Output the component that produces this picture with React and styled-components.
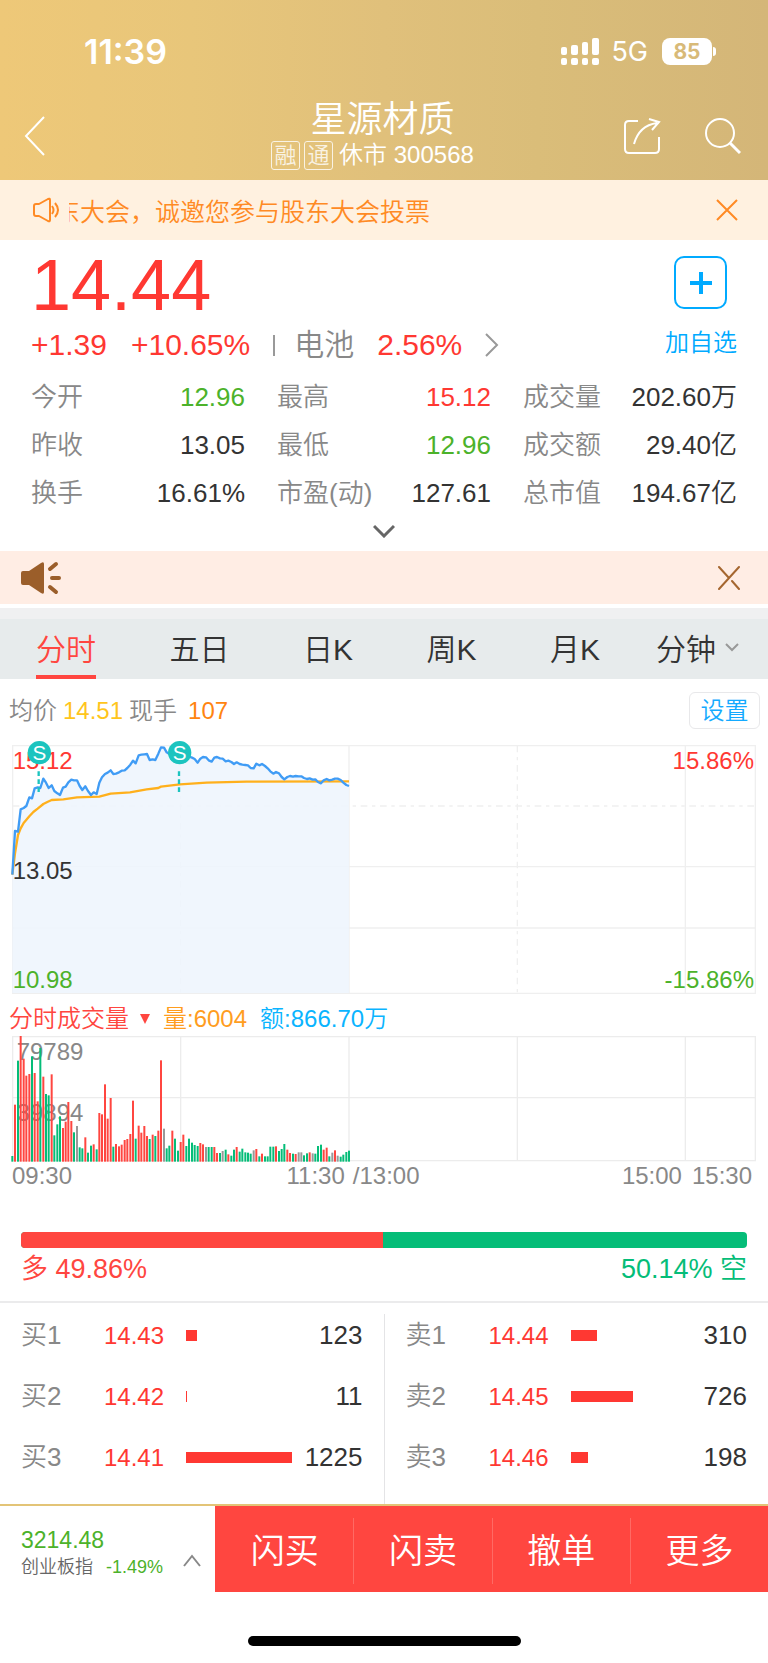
import React from 'react';
import styled, { createGlobalStyle } from 'styled-components';

const RED = '#ff3832';
const GREEN = '#4cb22a';
const DARK = '#333';
const GREY = '#888';

const quoteItems = [
  { label: '今开', value: '12.96', color: GREEN },
  { label: '最高', value: '15.12', color: RED },
  { label: '成交量', value: '202.60万' },
  { label: '昨收', value: '13.05' },
  { label: '最低', value: '12.96', color: GREEN },
  { label: '成交额', value: '29.40亿' },
  { label: '换手', value: '16.61%' },
  { label: '市盈(动)', value: '127.61' },
  { label: '总市值', value: '194.67亿' },
];

const tabs = ['分时', '五日', '日K', '周K', '月K'];

const buyOrders = [
  { label: '买1', price: '14.43', amount: 123 },
  { label: '买2', price: '14.42', amount: 11 },
  { label: '买3', price: '14.41', amount: 1225 },
];

const sellOrders = [
  { label: '卖1', price: '14.44', amount: 310 },
  { label: '卖2', price: '14.45', amount: 726 },
  { label: '卖3', price: '14.46', amount: 198 },
];

const MAX_AMOUNT = 1225;

const actions = ['闪买', '闪卖', '撤单', '更多'];

// one sample per minute, in chart units from the top
const prices = [
  389, 258, 260, 193, 189, 183, 157, 160, 130, 127, 129, 101, 113, 129, 121, 138, 145, 150, 128, 125,
  112, 104, 106, 106, 123, 135, 124, 138, 150, 142, 147, 113, 97, 87, 83, 76, 87, 86, 82, 77,
  76, 69, 59, 47, 55, 31, 29, 28, 27, 45, 43, 45, 26, 7, 8, 22, 27, 19, 27, 35,
  29, 33, 25, 35, 38, 42, 53, 41, 36, 37, 46, 50, 38, 36, 40, 41, 49, 47, 51, 57,
  52, 57, 59, 60, 61, 69, 70, 56, 61, 57, 63, 70, 79, 86, 81, 85, 96, 103, 96, 93,
  95, 93, 94, 94, 99, 102, 100, 104, 103, 111, 115, 106, 102, 106, 104, 101, 101, 105, 113, 120,
  123,
];

const averageLine =
  'M1 389L9 325L18 270L26 250L35 234L52 214L64 201L77 191L94 177L106 171L119 165L154 163L195 157L262 155L296 146L354 142L404 133L439 129L447 125L504 118L584 113L704 110L1011 109';

// r: up, g: down, x: flat
const volumes = (
  'g17 r171 g303 r377 r309 r258 r263 g316 r266 r181 g341 r255 g203 g199 r262 g79 g112 g136 r101 r120 ' +
  'r179 r122 g88 x107 g43 g40 r73 g27 g48 r52 g37 r146 r142 r232 r129 r191 g45 r53 r46 r51 ' +
  'r65 r68 r83 r183 g69 r108 r87 r107 r77 g68 r81 g77 r93 r304 x99 g40 g48 r93 g69 g33 ' +
  'r59 r81 g47 g69 g57 g50 g47 r56 r52 x44 g44 g44 r44 r26 g26 x32 g36 r22 g18 g36 ' +
  'r44 g30 g39 g28 g27 g24 x34 r38 g16 r24 g16 g16 g45 g45 r46 g32 g38 g53 r36 r26 ' +
  'g24 r23 x28 x28 g19 g25 r28 x25 g24 g47 g51 r36 r42 g16 x27 r34 x18 g15 g21 g29 g33'
).split(' ');

const barColors = { r: '#ff4640', g: '#05bd78', x: '#999' };

const minuteX = (i) => 1 + Math.round((i * 1010) / 120);

function PriceChart() {
  const line = prices.map((y, i) => `${i ? 'L' : 'M'}${minuteX(i)} ${y}`).join('');
  return (
    <Chart viewBox="0 0 2232 747" role="img" aria-label="分时走势">
      <g stroke="#efefef" strokeWidth="4" fill="none">
        <path d="M2 2H2230V745H2ZM2 365H2230M2 549H2230" />
        <path d="M1011 2V745M2020 2V745" />
        <path d="M2 183H2230" strokeDasharray="20 14 10 14" />
        <path d="M506 2V745M1516 2V745" strokeDasharray="20 14 10 14" />
      </g>
      <path d={`${line}V744H1Z`} fill="#edf5fd" fillOpacity="0.85" />
      <ChartText x="2" y="73" fill={RED}>15.12</ChartText>
      <ChartText x="2" y="402" fill={DARK}>13.05</ChartText>
      <ChartText x="2" y="730" fill={GREEN}>10.98</ChartText>
      <ChartText x="2226" y="73" textAnchor="end" fill={RED}>15.86%</ChartText>
      <ChartText x="2226" y="730" textAnchor="end" fill={GREEN}>-15.86%</ChartText>
      <path d={averageLine} fill="none" stroke="#ffb01c" strokeWidth="7" strokeLinejoin="round" />
      <path d={line} fill="none" stroke="#409cf5" strokeWidth="7" strokeLinejoin="round" />
      {[82, 503].map((x) => (
        <g key={x}>
          <path d={`M${x - 2} 79V142`} stroke="#1cc4bf" strokeWidth="7" strokeDasharray="14 10" />
          <circle cx={x} cy="23" r="35" fill="#1cc4bf" />
          <ChartText x={x} y="46" textAnchor="middle" fill="#fff" $size={62}>S</ChartText>
        </g>
      ))}
    </Chart>
  );
}

function VolumeChart() {
  return (
    <Chart viewBox="0 0 2232 378" role="img" aria-label="分时成交量">
      <g stroke="#ececec" strokeWidth="4" fill="none">
        <path d="M2 2H2230V374H2ZM2 185H2230" />
        <path d="M506 2V374M1011 2V374M1516 2V374M2020 2V374" />
      </g>
      <ChartText x="14" y="71" fill={GREY}>79789</ChartText>
      <ChartText x="14" y="255" fill={GREY}>39894</ChartText>
      {volumes.map((item, i) => {
        const height = Number(item.slice(1));
        return (
          <rect
            key={i}
            x={minuteX(i) - 3}
            y={377 - height}
            width="6"
            height={height}
            fill={barColors[item[0]]}
          />
        );
      })}
    </Chart>
  );
}

function Orders({ title, orders }) {
  return (
    <OrderTable aria-label={title}>
      <tbody>
        {orders.map(({ label, price, amount }) => (
          <tr key={label}>
            <OrderLabel scope="row">{label}</OrderLabel>
            <OrderPrice>{price}</OrderPrice>
            <AmountCell>
              <AmountTrack>
                <AmountBar style={{ width: `${(amount / MAX_AMOUNT) * 100}%` }} />
              </AmountTrack>
            </AmountCell>
            <OrderAmount>{amount}</OrderAmount>
          </tr>
        ))}
      </tbody>
    </OrderTable>
  );
}

function App() {
  return (
    <Page>
      <GlobalStyle />
      <Header>
        <StatusBar>
          <Clock>11:39</Clock>
          <svg width="38" height="27" viewBox="0 0 38 27" fill="#fff" aria-hidden="true">
            <rect x="0" y="9" width="6" height="8" rx="2" />
            <rect x="10" y="7" width="7" height="10" rx="2" />
            <rect x="21" y="4" width="6" height="13" rx="2" />
            <rect x="31" y="0" width="7" height="17" rx="2" />
            <rect x="0" y="20" width="6" height="7" rx="2" />
            <rect x="10" y="20" width="7" height="7" rx="2" />
            <rect x="21" y="20" width="6" height="7" rx="2" />
            <rect x="31" y="20" width="7" height="7" rx="2" />
          </svg>
          <Network>5G</Network>
          <Battery>85</Battery>
        </StatusBar>
        <NavBar>
          <IconButton type="button" aria-label="返回">
            <svg width="22" height="42" viewBox="0 0 22 42" fill="none" stroke="#fff" strokeWidth="2">
              <path d="M20 2L2 21L20 40" />
            </svg>
          </IconButton>
          <Heading>
            <StockName>星源材质</StockName>
            <StockMeta>
              <Badge>融</Badge>
              <Badge>通</Badge>
              <StockCode>休市 300568</StockCode>
            </StockMeta>
          </Heading>
          <NavActions>
            <IconButton type="button" aria-label="分享">
              <svg width="38" height="38" viewBox="0 0 38 38" fill="none" stroke="#fff" strokeWidth="2">
                <path d="M15 4H6Q2 4 2 8V32Q2 36 6 36H32Q36 36 36 32V20" />
                <path d="M11 27C14 16 20 8 34 6M26 2L36 5L29 13" />
              </svg>
            </IconButton>
            <IconButton type="button" aria-label="搜索">
              <svg width="38" height="38" viewBox="0 0 38 38" fill="none" stroke="#fff" strokeWidth="2">
                <circle cx="17" cy="16" r="14" />
                <path d="M27 26L37 36" strokeWidth="3" />
              </svg>
            </IconButton>
          </NavActions>
        </NavBar>
      </Header>

      <Notice>
        <svg width="28" height="26" viewBox="0 0 28 26" fill="none" stroke="#ff8a24" strokeWidth="2" strokeLinejoin="round" aria-hidden="true">
          <path d="M2 9Q2 7 4 7H7L16 2Q18 1 18 3V23Q18 25 16 24L7 19H4Q2 19 2 17Z" />
          <path d="M20 9Q23 13 20 17M23 6Q29 13 23 20" />
        </svg>
        <Marquee>
          <MarqueeText>东大会，诚邀您参与股东大会投票</MarqueeText>
        </Marquee>
        <IconButton type="button" aria-label="关闭公告">
          <svg width="22" height="22" viewBox="0 0 22 22" stroke="#ff8a24" strokeWidth="2">
            <path d="M1 1L21 21M21 1L1 21" />
          </svg>
        </IconButton>
      </Notice>

      <Quote>
        <QuoteTop>
          <div>
            <Price>14.44</Price>
            <ChangeRow>
              <span>+1.39</span>
              <Percent>+10.65%</Percent>
              <Divider />
              <Sector href="#sector">
                <SectorName>电池</SectorName>
                <span>2.56%</span>
                <svg width="14" height="24" viewBox="0 0 14 24" fill="none" stroke="#999" strokeWidth="2">
                  <path d="M1 1L12 12L1 23" />
                </svg>
              </Sector>
            </ChangeRow>
          </div>
          <Favourite type="button">
            <PlusBox>
              <svg width="24" height="24" viewBox="0 0 24 24" stroke="#00aaff" strokeWidth="4">
                <path d="M12 1V23M1 12H23" />
              </svg>
            </PlusBox>
            加自选
          </Favourite>
        </QuoteTop>
        <QuoteGrid>
          {quoteItems.map(({ label, value, color }) => (
            <QuoteItem key={label}>
              <dt>{label}</dt>
              <QuoteValue $color={color}>{value}</QuoteValue>
            </QuoteItem>
          ))}
        </QuoteGrid>
        <ExpandButton type="button" aria-label="展开">
          <svg width="22" height="14" viewBox="0 0 22 14" fill="none" stroke="#666" strokeWidth="3">
            <path d="M1 2L11 12L21 2" />
          </svg>
        </ExpandButton>
      </Quote>

      <Broadcast>
        <svg width="42" height="34" viewBox="0 0 42 34" fill="#9b5e2a" stroke="#9b5e2a" aria-hidden="true">
          <path d="M1 12Q1 10 3 10H9L21 2Q24 0 24 3V31Q24 34 21 32L9 24H3Q1 24 1 22Z" stroke="none" />
          <path d="M30 8L36 3M32 17H39M30 26L36 31" strokeWidth="4" strokeLinecap="round" />
        </svg>
        <IconButton type="button" aria-label="关闭广播">
          <svg width="22" height="24" viewBox="0 0 22 24" stroke="#a5662f" strokeWidth="2" strokeLinecap="round">
            <path d="M1 1L11 12M14 15L21 23M21 1L1 23" />
          </svg>
        </IconButton>
      </Broadcast>

      <TabBar>
        <TabList>
          {tabs.map((tab, i) => (
            <Tab key={tab} type="button" $active={i === 0}>
              {tab}
            </Tab>
          ))}
        </TabList>
        <Tab type="button">
          分钟
          <svg width="14" height="9" viewBox="0 0 14 9" fill="none" stroke="#999" strokeWidth="2">
            <path d="M1 1L7 7L13 1" />
          </svg>
        </Tab>
      </TabBar>

      <ChartInfo>
        <span>均价</span>
        <InfoValue $color="#ffc51c">14.51</InfoValue>
        <span>现手</span>
        <LastVolume>107</LastVolume>
        <SettingsButton type="button">设置</SettingsButton>
      </ChartInfo>

      <ChartPanel>
        <PriceChart />
        <VolumeInfo>
          <VolumeType type="button">
            分时成交量
            <VolumeCaret width="10" height="10" viewBox="0 0 10 10" fill="#ff4640" aria-hidden="true">
              <path d="M0 0H10L5 10Z" />
            </VolumeCaret>
          </VolumeType>
          <InfoValue $color="#ff9d1f">量:6004</InfoValue>
          <InfoValue $color="#0ab4ff">额:866.70万</InfoValue>
        </VolumeInfo>
        <VolumeChart />
        <TimeAxis>
          <MorningAxis>
            <span>09:30</span>
            <span>11:30</span>
          </MorningAxis>
          <span>/13:00</span>
          <ClosingAxis>
            <span>15:00</span>
            <span>15:30</span>
          </ClosingAxis>
        </TimeAxis>
      </ChartPanel>

      <Sentiment>
        <RatioBar>
          <RatioLong style={{ width: '49.86%' }} />
        </RatioBar>
        <RatioLabels>
          <RatioText $color="#ff4640">多 49.86%</RatioText>
          <RatioText $color="#05bd78">50.14% 空</RatioText>
        </RatioLabels>
      </Sentiment>

      <OrderBook>
        <Orders title="买盘" orders={buyOrders} />
        <BookDivider />
        <Orders title="卖盘" orders={sellOrders} />
      </OrderBook>

      <Footer>
        <IndexButton type="button">
          <IndexInfo>
            <IndexValue>3214.48</IndexValue>
            <IndexRow>
              <span>创业板指</span>
              <IndexChange>-1.49%</IndexChange>
            </IndexRow>
          </IndexInfo>
          <IndexArrow width="18" height="13" viewBox="0 0 18 13" fill="none" stroke="#888" strokeWidth="2">
            <path d="M1 12L9 2L17 12" />
          </IndexArrow>
        </IndexButton>
        <ActionBar>
          {actions.map((action) => (
            <ActionButton key={action} type="button">
              {action}
            </ActionButton>
          ))}
        </ActionBar>
      </Footer>
      <HomeIndicator />
    </Page>
  );
}

const GlobalStyle = createGlobalStyle`
  * {
    box-sizing: border-box;
  }

  body {
    margin: 0;
    background: #fff;
    color: ${DARK};
    font-family: 'Liberation Sans', 'Noto Sans CJK SC', sans-serif;
    font-weight: 350;
  }

  button {
    margin: 0;
    padding: 0;
    border: 0;
    background: none;
    color: inherit;
    font: inherit;
    cursor: pointer;
  }

  svg {
    display: block;
    flex-shrink: 0;
  }
`;

const Page = styled.main`
  display: flex;
  flex-direction: column;
`;

const Header = styled.header`
  height: 180px;
  background: linear-gradient(90deg, #eec878 0%, #e8c67a 25%, #e0c07b 50%, #dabd79 70%, #d4b678 100%);
  color: #fff;
`;

const StatusBar = styled.div`
  display: flex;
  align-items: center;
  height: 100px;
  padding: 3px 52px 0 84px;
`;

const Clock = styled.time`
  margin-right: auto;
  font-family: Inter, sans-serif;
  font-size: 34px;
  font-weight: 600;
`;

const Network = styled.span`
  margin: 0 14px 0 12px;
  font-family: Inter, sans-serif;
  font-size: 27px;
  font-weight: 400;
`;

const Battery = styled.span`
  display: flex;
  align-items: center;
  justify-content: center;
  position: relative;
  width: 50px;
  height: 27px;
  margin-right: 4px;
  border-radius: 8px;
  background: #fff;
  color: #d8ba78;
  font-family: Inter, sans-serif;
  font-size: 21px;
  font-weight: 700;

  &::after {
    content: '';
    position: absolute;
    right: -4px;
    top: 9px;
    width: 3px;
    height: 9px;
    border-radius: 0 3px 3px 0;
    background: #fff;
  }
`;

const NavBar = styled.div`
  display: grid;
  grid-template-columns: 1fr auto 1fr;
  align-items: center;
  height: 72px;
  padding: 0 27px 0 24px;
`;

const IconButton = styled.button`
  display: flex;
  align-items: center;
  justify-content: center;
  justify-self: start;
`;

const Heading = styled.div`
  display: flex;
  flex-direction: column;
  align-items: center;
`;

const StockName = styled.h1`
  margin: 0;
  font-size: 36px;
  font-weight: 350;
  line-height: 38px;
`;

const StockMeta = styled.div`
  display: flex;
  align-items: center;
  gap: 4px;
  padding-right: 20px;
  font-size: 24px;
  line-height: 32px;
`;

const Badge = styled.span`
  width: 29px;
  height: 29px;
  border: 1px solid #fff;
  border-radius: 3px;
  font-size: 22px;
  line-height: 27px;
  text-align: center;
  opacity: 0.8;
`;

const StockCode = styled.span`
  margin-left: 2px;
`;

const NavActions = styled.div`
  display: flex;
  justify-content: flex-end;
  gap: 42px;
`;

const Notice = styled.section`
  display: flex;
  align-items: center;
  height: 60px;
  padding: 0 30px 0 32px;
  background: #fff1e0;
  color: #ff8a24;
  font-size: 25px;
`;

const Marquee = styled.div`
  flex: 1;
  margin-left: 9px;
  overflow: hidden;
  white-space: nowrap;
`;

const MarqueeText = styled.div`
  margin-left: -14px;
`;

const Quote = styled.section`
  padding: 16px 31px 0;
`;

const QuoteTop = styled.div`
  display: flex;
  justify-content: space-between;
  height: 117px;
`;

const Price = styled.div`
  color: ${RED};
  font-size: 72px;
  line-height: 58px;
`;

const ChangeRow = styled.div`
  display: flex;
  align-items: center;
  height: 62px;
  color: ${RED};
  font-size: 30px;
`;

const Percent = styled.span`
  margin-left: 24px;
`;

const Divider = styled.span`
  width: 2px;
  height: 21px;
  margin: 0 19px 0 23px;
  background: #999;
`;

const Sector = styled.a`
  display: flex;
  align-items: center;
  gap: 23px;
  color: inherit;
  line-height: 40px;
  text-decoration: none;
`;

const SectorName = styled.span`
  color: ${GREY};
`;

const Favourite = styled.button`
  display: flex;
  flex-direction: column;
  align-items: flex-end;
  align-self: flex-start;
  gap: 17px;
  color: #00aaff;
  font-size: 24px;
  line-height: 34px;
`;

const PlusBox = styled.span`
  display: flex;
  align-items: center;
  justify-content: center;
  width: 53px;
  height: 53px;
  margin-right: 10px;
  border: 2px solid #00aaff;
  border-radius: 10px;
`;

const QuoteGrid = styled.dl`
  display: grid;
  grid-template-columns: repeat(3, 1fr);
  column-gap: 32px;
  margin: 0;
`;

const QuoteItem = styled.div`
  display: flex;
  align-items: center;
  justify-content: space-between;
  height: 48px;
  color: ${GREY};
  font-size: 26px;
  line-height: 48px;
`;

const QuoteValue = styled.dd`
  margin: 0;
  color: ${(props) => props.$color || DARK};
`;

const ExpandButton = styled.button`
  display: flex;
  justify-content: center;
  width: 100%;
  padding: 7px 0 13px;
`;

const Broadcast = styled.section`
  display: flex;
  align-items: center;
  justify-content: space-between;
  height: 53px;
  padding: 0 28px 0 20px;
  background: #ffede4;
`;

const TabBar = styled.nav`
  display: flex;
  gap: 56px;
  margin-top: 4px;
  padding: 0 29px 0 36px;
  border-top: 11px solid #f0f0f1;
  background: #e7ebec;
`;

const TabList = styled.div`
  display: flex;
  flex: 1;
  justify-content: space-between;
`;

const Tab = styled.button`
  display: flex;
  align-items: center;
  gap: 9px;
  height: 60px;
  border-bottom: 4px solid ${(props) => (props.$active ? '#ff4640' : 'transparent')};
  color: ${(props) => (props.$active ? '#ff4640' : DARK)};
  font-size: 30px;
`;

const ChartInfo = styled.div`
  display: flex;
  align-items: center;
  gap: 6px;
  height: 66px;
  padding: 0 8px 3px 9px;
  color: ${GREY};
  font-size: 24px;
  line-height: 36px;
`;

const InfoValue = styled.span`
  color: ${(props) => props.$color};
`;

const LastVolume = styled.span`
  margin-left: 5px;
  color: #ff8410;
`;

const SettingsButton = styled.button`
  width: 71px;
  height: 37px;
  margin-left: auto;
  border: 1px solid #e8e8ea;
  border-radius: 6px;
  color: #14aaff;
  line-height: 32px;
`;

const ChartPanel = styled.section`
  padding: 0 12px;
`;

const Chart = styled.svg`
  width: 100%;
  height: auto;
  overflow: visible;
`;

const ChartText = styled.text`
  font-size: ${(props) => props.$size || 72}px;
`;

const VolumeInfo = styled.div`
  display: flex;
  align-items: center;
  gap: 13px;
  height: 42px;
  margin-left: -3px;
  padding-top: 2px;
  font-size: 24px;
`;

const VolumeType = styled.button`
  display: flex;
  align-items: center;
  gap: 11px;
  color: #ff4640;
`;

const VolumeCaret = styled.svg`
  margin-top: 6px;
`;

const TimeAxis = styled.div`
  display: flex;
  color: ${GREY};
  font-size: 24px;
  line-height: 28px;
`;

const MorningAxis = styled.div`
  display: flex;
  justify-content: space-between;
  width: 45%;
  padding-right: 2px;
  margin-right: 6px;
`;

const ClosingAxis = styled.div`
  display: flex;
  gap: 10px;
  margin-left: auto;
  padding-right: 4px;
`;

const Sentiment = styled.section`
  padding: 42px 21px 11px;
  border-bottom: 2px solid #ebebec;
`;

const RatioBar = styled.div`
  height: 16px;
  border-radius: 4px;
  background: #05bd78;
  overflow: hidden;
`;

const RatioLong = styled.div`
  height: 100%;
  background: #ff4640;
`;

const RatioLabels = styled.div`
  display: flex;
  justify-content: space-between;
  height: 42px;
  line-height: 42px;
`;

const RatioText = styled.span`
  color: ${(props) => props.$color};
  font-size: 27px;
`;

const OrderBook = styled.section`
  display: grid;
  grid-template-columns: 1fr 1px 1fr;
  height: 201px;
  padding-top: 2px;
`;

const BookDivider = styled.div`
  margin-top: 9px;
  background: #e4e4e6;
`;

const OrderTable = styled.table`
  align-self: start;
  width: 100%;
  padding: 0 21px;
  border-spacing: 0;
  table-layout: fixed;

  td,
  th {
    height: 61px;
    padding: 0;
    line-height: 60px;
    vertical-align: baseline;
  }
`;

const OrderLabel = styled.th`
  width: 83px;
  color: ${GREY};
  font-size: 26px;
  font-weight: 350;
  text-align: left;
`;

const OrderPrice = styled.td`
  width: 82px;
  color: ${RED};
  font-size: 24px;
`;

const AmountCell = styled.td`
  && {
    vertical-align: middle;
  }
`;

const AmountTrack = styled.div`
  margin-right: -36px;
`;

const AmountBar = styled.div`
  min-width: 1px;
  height: 11px;
  background: ${RED};
`;

const OrderAmount = styled.td`
  width: 107px;
  font-size: 26px;
  text-align: right;
`;

const Footer = styled.footer`
  display: flex;
  border-top: 2px solid #e3c477;
`;

const IndexButton = styled.button`
  display: flex;
  align-items: center;
  justify-content: space-between;
  width: 28%;
  height: 86px;
  padding: 8px 14px 0 21px;
`;

const IndexInfo = styled.span`
  display: flex;
  flex-direction: column;
  text-align: left;
`;

const IndexValue = styled.span`
  color: ${GREEN};
  font-size: 23px;
  line-height: 28px;
`;

const IndexRow = styled.span`
  display: flex;
  gap: 13px;
  color: #666;
  font-size: 18px;
  line-height: 26px;
`;

const IndexChange = styled.span`
  color: ${GREEN};
`;

const IndexArrow = styled.svg`
  margin-top: 14px;
`;

const ActionBar = styled.div`
  display: flex;
  flex: 1;
  background: #ff4640;
`;

const ActionButton = styled.button`
  flex: 1;
  height: 66px;
  margin-top: 12px;
  padding-bottom: 5px;
  border-left: 1px solid #ff6a64;
  color: #fff;
  font-size: 34px;

  &:first-child {
    border-left-color: transparent;
  }
`;

const HomeIndicator = styled.div`
  width: 273px;
  height: 10px;
  margin: 44px auto 17px;
  border-radius: 5px;
  background: #000;
`;

export default App;
